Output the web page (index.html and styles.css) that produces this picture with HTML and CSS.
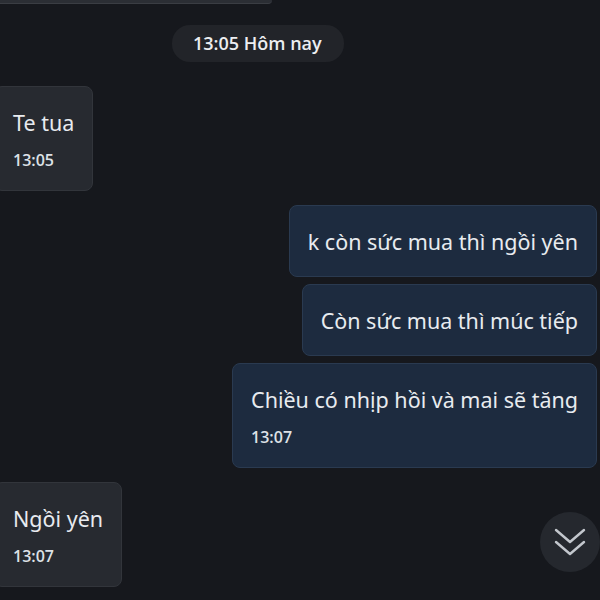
FILE: index.html
```html
<!DOCTYPE html>
<html lang="vi">

<head>
    <meta charset="UTF-8">
    <meta name="viewport" content="width=device-width, initial-scale=1.0">
    <title>Chat</title>
    <link rel="stylesheet" href="styles.css">
</head>

<body>
    <div class="chat">
        <div class="bubble-stub"></div>

        <div class="date-pill">13:05 Hôm nay</div>

        <div class="msg msg-in gap-big">
            <div class="msg-text">Te tua</div>
            <div class="msg-time">13:05</div>
        </div>

        <div class="msg msg-out gap-big">
            <div class="msg-text">k còn sức mua thì ngồi yên</div>
        </div>
        <div class="msg msg-out">
            <div class="msg-text">Còn sức mua thì múc tiếp</div>
        </div>
        <div class="msg msg-out">
            <div class="msg-text">Chiều có nhịp hồi và mai sẽ tăng</div>
            <div class="msg-time">13:07</div>
        </div>

        <div class="msg msg-in gap-big">
            <div class="msg-text">Ngồi yên</div>
            <div class="msg-time">13:07</div>
        </div>
    </div>

    <button class="scroll-down" aria-label="Cuộn xuống">
        <svg width="32" height="30" viewBox="0 0 32 30" fill="none" stroke="#c3c7cd" stroke-width="2.4"
            stroke-linecap="round" stroke-linejoin="round">
            <polyline points="2,3 16,15 30,3" />
            <polyline points="2,15 16,27 30,15" />
        </svg>
    </button>
</body>

</html>
```

FILE: styles.css
```css
/* 全局 */
body {
    margin: 0;
    height: 600px;
    overflow: hidden;
    background-color: #16181d;
    font-family: "Noto Sans", "Open Sans", sans-serif;
    color: #e3e6eb;
    position: relative;
}

.chat {
    display: flex;
    flex-direction: column;
    padding-right: 3px;
}

/* 上一条消息的底边 */
.bubble-stub {
    width: 278px;
    height: 3px;
    margin-left: -6px;
    background-color: #2b2e34;
    border-bottom: 1px solid #3a3d43;
    border-radius: 0 0 8px 8px;
}

/* 日期 */
.date-pill {
    align-self: flex-start;
    margin: 21px 0 0 172px;
    height: 37px;
    line-height: 37px;
    padding: 0 22px 0 21px;
    border-radius: 18px;
    background-color: #222429;
    font-family: "Open Sans", "Noto Sans", sans-serif;
    font-size: 18px;
    font-weight: 600;
    color: #eceef1;
}

/* 消息气泡 */
.msg {
    padding: 22px 18px 20px;
    border-radius: 8px;
    margin-top: 7px;
}

.msg.gap-big {
    margin-top: 14px;
}

.date-pill + .msg {
    margin-top: 24px;
}

.msg-in {
    align-self: flex-start;
    margin-left: -6px;
    background-color: #272a30;
    border: 1px solid #32353b;
}

.msg-out {
    align-self: flex-end;
    background-color: #1d2b3f;
    border: 1px solid #2a3a50;
}

.msg-text {
    font-size: 21.5px;
    line-height: 28px;
    white-space: nowrap;
    color: #e8ebef;
}

.msg-time {
    margin-top: 13px;
    font-family: "Open Sans", "Noto Sans", sans-serif;
    font-size: 16px;
    font-weight: 600;
    line-height: 20px;
    color: #dde1e6;
}

/* 滚动到底部按钮 */
.scroll-down {
    position: absolute;
    left: 540px;
    top: 512px;
    width: 60px;
    height: 60px;
    border: none;
    border-radius: 50%;
    background-color: #25282e;
    display: flex;
    align-items: center;
    justify-content: center;
    padding: 0;
    cursor: pointer;
}
```
